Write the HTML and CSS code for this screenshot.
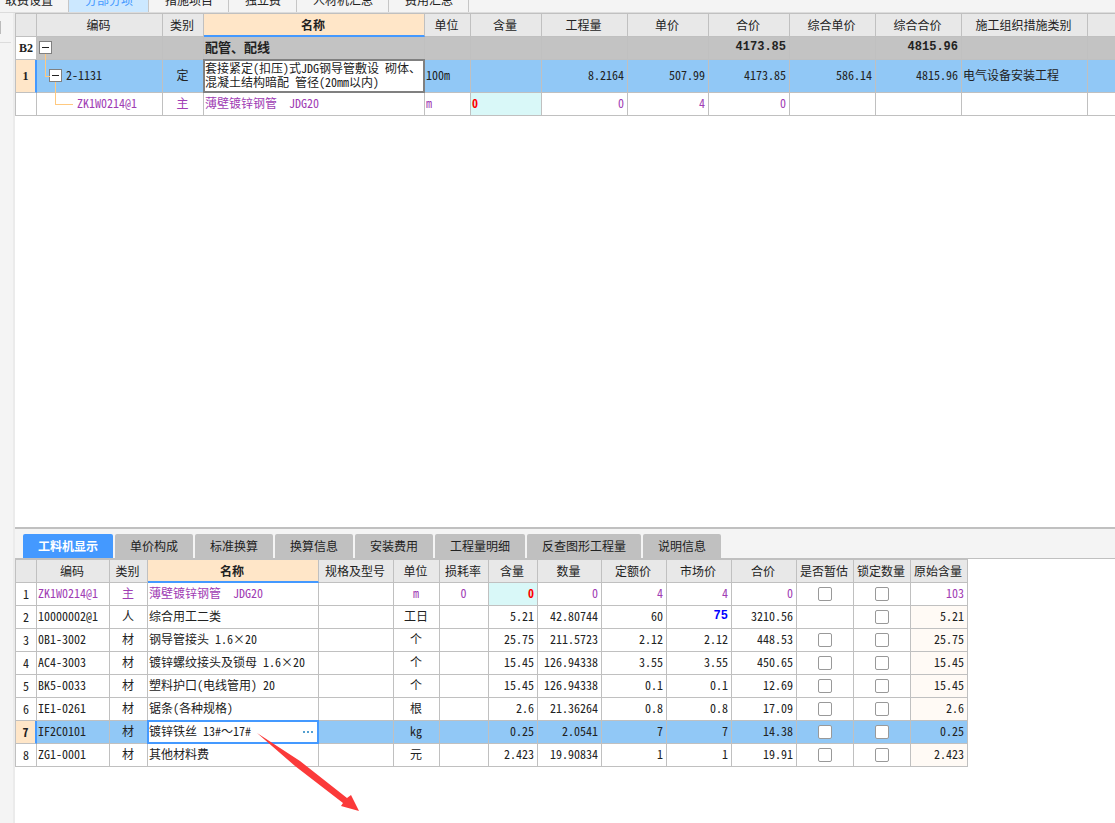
FILE: index.html
```html
<!DOCTYPE html>
<html lang="zh-CN">
<head>
<meta charset="utf-8">
<title>分部分项</title>
<link rel="stylesheet" href="styles.css">
</head>
<body>
<nav class="top-tabs">
  <button class="top-tab">取费设置</button>
  <button class="top-tab active">分部分项</button>
  <button class="top-tab">措施项目</button>
  <button class="top-tab">独立费</button>
  <button class="top-tab">人材机汇总</button>
  <button class="top-tab">费用汇总</button>
</nav>
<div class="workspace">
  <aside class="rail"><div class="rail-head"><i class="rail-handle"></i></div></aside>
  <main class="content">
    <section class="upper">
      <table class="grid items">
        <colgroup><col class="w21"><col class="w126"><col class="w41"><col class="w221"><col class="w46"><col class="w71"><col class="w86"><col class="w81"><col class="w81"><col class="w86"><col class="w86"><col class="w126"><col></colgroup>
        <thead><tr><th></th><th>编码</th><th>类别</th><th class="sorted">名称</th><th>单位</th><th>含量</th><th>工程量</th><th>单价</th><th>合价</th><th>综合单价</th><th>综合合价</th><th>施工组织措施类别</th><th></th></tr></thead>
        <tbody>
          <tr class="group"><td class="no">B2</td><td class="tree"><button class="toggle" aria-label="折叠"></button></td><td></td><td>配管、配线</td><td></td><td></td><td></td><td></td><td class="n">4173.85</td><td></td><td class="n">4815.96</td><td></td><td></td></tr>
          <tr class="current tall"><td class="no">1</td><td class="tree level-1"><div class="node"><button class="toggle" aria-label="折叠"></button><span>2-1131</span></div></td><td class="c">定</td><td class="host"><div class="cell-focus">套接紧定(扣压)式JDG钢导管敷设 砌体、<br>混凝土结构暗配 管径(20mm以内)</div></td><td>100m</td><td></td><td class="n">8.2164</td><td class="n">507.99</td><td class="n">4173.85</td><td class="n">586.14</td><td class="n">4815.96</td><td>电气设备安装工程</td><td></td></tr>
          <tr class="main-material"><td></td><td class="tree level-2">ZK1W0214@1</td><td class="c">主</td><td>薄壁镀锌钢管&nbsp; JDG20</td><td>m</td><td class="edited">0</td><td class="n">0</td><td class="n">4</td><td class="n">0</td><td></td><td></td><td></td><td></td></tr>
        </tbody>
      </table>
    </section>
    <section class="lower">
      <div class="sub-tabs">
        <button class="sub-tab active">工料机显示</button>
        <button class="sub-tab">单价构成</button>
        <button class="sub-tab">标准换算</button>
        <button class="sub-tab">换算信息</button>
        <button class="sub-tab">安装费用</button>
        <button class="sub-tab">工程量明细</button>
        <button class="sub-tab">反查图形工程量</button>
        <button class="sub-tab">说明信息</button>
      </div>
      <table class="grid resources">
        <colgroup><col class="w21"><col class="w73"><col class="w38"><col class="w171"><col class="w75"><col class="w46"><col class="w49"><col class="w49"><col class="w64"><col class="w65"><col class="w65"><col class="w65"><col class="w57"><col class="w57"><col class="w57"></colgroup>
        <thead><tr><th></th><th>编码</th><th>类别</th><th class="sorted">名称</th><th>规格及型号</th><th>单位</th><th>损耗率</th><th>含量</th><th>数量</th><th>定额价</th><th>市场价</th><th>合价</th><th>是否暂估</th><th>锁定数量</th><th>原始含量</th></tr></thead>
        <tbody>
          <tr class="main-material"><td class="no">1</td><td>ZK1W0214@1</td><td class="c">主</td><td>薄壁镀锌钢管&nbsp; JDG20</td><td></td><td class="c">m</td><td class="c">0</td><td class="n edited">0</td><td class="n">0</td><td class="n">4</td><td class="n">4</td><td class="n">0</td><td class="c"><input type="checkbox" aria-label="是否暂估"></td><td class="c"><input type="checkbox" aria-label="锁定数量"></td><td class="n">103</td></tr>
          <tr><td class="no">2</td><td>10000002@1</td><td class="c">人</td><td>综合用工二类</td><td></td><td class="c">工日</td><td></td><td class="n">5.21</td><td class="n">42.80744</td><td class="n">60</td><td class="n changed">75</td><td class="n">3210.56</td><td></td><td class="c"><input type="checkbox" aria-label="锁定数量"></td><td class="n origin">5.21</td></tr>
          <tr><td class="no">3</td><td>0B1-3002</td><td class="c">材</td><td>钢导管接头 1.6×20</td><td></td><td class="c">个</td><td></td><td class="n">25.75</td><td class="n">211.5723</td><td class="n">2.12</td><td class="n">2.12</td><td class="n">448.53</td><td class="c"><input type="checkbox" aria-label="是否暂估"></td><td class="c"><input type="checkbox" aria-label="锁定数量"></td><td class="n origin">25.75</td></tr>
          <tr><td class="no">4</td><td>AC4-3003</td><td class="c">材</td><td>镀锌螺纹接头及锁母 1.6×20</td><td></td><td class="c">个</td><td></td><td class="n">15.45</td><td class="n">126.94338</td><td class="n">3.55</td><td class="n">3.55</td><td class="n">450.65</td><td class="c"><input type="checkbox" aria-label="是否暂估"></td><td class="c"><input type="checkbox" aria-label="锁定数量"></td><td class="n origin">15.45</td></tr>
          <tr><td class="no">5</td><td>BK5-0033</td><td class="c">材</td><td>塑料护口(电线管用) 20</td><td></td><td class="c">个</td><td></td><td class="n">15.45</td><td class="n">126.94338</td><td class="n">0.1</td><td class="n">0.1</td><td class="n">12.69</td><td class="c"><input type="checkbox" aria-label="是否暂估"></td><td class="c"><input type="checkbox" aria-label="锁定数量"></td><td class="n origin">15.45</td></tr>
          <tr><td class="no">6</td><td>IE1-0261</td><td class="c">材</td><td>锯条(各种规格)</td><td></td><td class="c">根</td><td></td><td class="n">2.6</td><td class="n">21.36264</td><td class="n">0.8</td><td class="n">0.8</td><td class="n">17.09</td><td class="c"><input type="checkbox" aria-label="是否暂估"></td><td class="c"><input type="checkbox" aria-label="锁定数量"></td><td class="n origin">2.6</td></tr>
          <tr class="current"><td class="no">7</td><td>IF2C0101</td><td class="c">材</td><td class="host"><div class="cell-edit"><input type="text" aria-label="名称" value="镀锌铁丝 13#～17#"><button class="more" aria-label="更多"><i></i><i></i><i></i></button></div><svg class="arrow" width="103" height="80" viewBox="0 0 103 80" aria-hidden="true"><path d="M0 0L43 28L90 65L94 62L102 78L84 73L86 70L38 33Z" fill="#fb3a3a"/></svg></td><td></td><td class="c">kg</td><td></td><td class="n">0.25</td><td class="n">2.0541</td><td class="n">7</td><td class="n">7</td><td class="n">14.38</td><td class="c"><input type="checkbox" aria-label="是否暂估"></td><td class="c"><input type="checkbox" aria-label="锁定数量"></td><td class="n">0.25</td></tr>
          <tr><td class="no">8</td><td>ZG1-0001</td><td class="c">材</td><td>其他材料费</td><td></td><td class="c">元</td><td></td><td class="n">2.423</td><td class="n">19.90834</td><td class="n">1</td><td class="n">1</td><td class="n">19.91</td><td class="c"><input type="checkbox" aria-label="是否暂估"></td><td class="c"><input type="checkbox" aria-label="锁定数量"></td><td class="n origin">2.423</td></tr>
        </tbody>
      </table>
    </section>
  </main>
</div>
</body>
</html>
```
FILE: styles.css
```css
* { box-sizing: border-box; }

body {
  margin: 0;
  min-height: 100vh;
  display: flex;
  flex-direction: column;
  overflow: hidden;
  background: #f4f4f4;
  color: #222;
  font: 12px/14px "Noto Sans Mono CJK SC", "Noto Sans CJK SC", monospace;
}

button, input { font: inherit; color: inherit; }

/* Top tab strip */
.top-tabs {
  display: flex;
  align-items: flex-end;
  height: 13px;
  margin-left: -11px;
  overflow: hidden;
  border-bottom: 1px solid #dcdcdc;
}
.top-tab {
  flex: none;
  height: 24px;
  padding: 0 15px 0 16px;
  border: 0;
  border-right: 1px solid #c6c6c6;
  background: #f4f4f4;
}
.top-tab.active { background: #cce8ff; color: #4499ff; }

.workspace { display: flex; flex: 1; }
.rail { flex: none; width: 15px; border-right: 2px solid #ebebeb; }
.rail-head { height: 30px; margin-right: 2px; padding-top: 8px; border-bottom: 1px solid #dcdcdc; }
.rail-handle { display: block; width: 1px; height: 13px; background: #bbb; }

.content { flex: 1; min-width: 0; display: flex; flex-direction: column; }
.upper { flex: 1; background: #fff; }
.lower { padding-bottom: 56px; border-top: 2px solid #c0c0c0; background: #fff; }

/* Grids */
.grid {
  table-layout: fixed;
  border-spacing: 0;
  border-top: 1px solid #c0c0c0;
  border-left: 1px solid #c0c0c0;
}
.items { width: 100%; }
.resources { width: 953px; }
.w21 { width: 21px; } .w38 { width: 38px; } .w41 { width: 41px; } .w46 { width: 46px; }
.w49 { width: 49px; } .w57 { width: 57px; } .w64 { width: 64px; } .w65 { width: 65px; }
.w71 { width: 71px; } .w73 { width: 73px; } .w75 { width: 75px; } .w81 { width: 81px; }
.w86 { width: 86px; } .w126 { width: 126px; } .w171 { width: 171px; } .w221 { width: 221px; }

.grid th, .grid td {
  height: 23px;
  padding: 0 2px 2px 1px;
  border-right: 1px solid #c0c0c0;
  border-bottom: 1px solid #c0c0c0;
  text-align: left;
  vertical-align: middle;
  white-space: nowrap;
}
.grid th { padding: 0 2px 0 0; background: #e8e8e8; font-weight: 400; text-align: center; }
.grid th.sorted { border-bottom: 2px solid #4499ff; background: #ffe6c8; font-weight: 700; }
.grid .n { padding-right: 3px; text-align: right; }
.grid .c { text-align: center; }
.grid .no { padding: 0; background: #fff; text-align: center; }
.grid .tall td { height: 33px; }
.items th:last-child, .items td:last-child { border-right: 0; }

.group td { background: #c3c3c3; font-size: 13px; font-weight: 700; }
.group td.n { font-family: "Liberation Mono", monospace; font-size: 12px; }
.items td.no { font-family: "Liberation Serif", serif; font-size: 12px; font-weight: 700; }
.current td { background: #91c8f6; }
.grid .current .no { border-right: 2px solid #4499ff; background: #ffe6c8; font-weight: 700; }
.main-material td { color: #a03cb4; }
.main-material td.no { color: #222; }
.grid .edited { background: #d9f8f8; color: #f00; font-weight: 700; }
.grid .changed { color: #00f; font-family: "Liberation Mono", monospace; font-weight: 700; }
.origin { background: #fffaf5; }

/* Tree column */
.grid .tree { position: relative; padding: 0 2px 2px; }
.grid .level-1 { padding-left: 12px; }
.grid .level-2 { padding-left: 40px; }
.node { display: flex; align-items: center; gap: 4px; }
.level-1::before, .level-2::before {
  content: "";
  position: absolute;
  z-index: 1;
  height: 22px;
  border-left: 1px solid #ffc97f;
  border-bottom: 1px solid #ffc97f;
}
.level-1::before { left: 8px; top: -6px; width: 4px; }
.level-2::before { left: 18px; top: -11px; width: 17px; }
.toggle {
  display: block;
  width: 13px;
  height: 13px;
  padding: 0;
  border: 1px solid #808080;
  background: linear-gradient(#222, #222) center / 7px 1px no-repeat #fff;
}

/* Focused and edited cells cover the surrounding grid lines */
.grid .host { position: relative; }
.cell-focus, .cell-edit { position: absolute; inset: -1px; background: #fff; }
.cell-focus { border: 2px solid #808080; }
.cell-edit { display: flex; border: 2px solid #4499ff; }
.cell-edit input { flex: 1; min-width: 0; padding: 0 0 2px; border: 0; outline: 0; background: none; }
.more { display: flex; gap: 2px; align-items: center; padding: 0 4px; border: 0; background: none; }
.more i { width: 2px; height: 2px; background: #55a0d0; }
.arrow { position: absolute; z-index: 2; left: 109px; top: 12px; }

input[type="checkbox"] {
  appearance: none;
  display: block;
  width: 14px;
  height: 14px;
  margin: 2px auto 0;
  border: 1px solid #999;
  border-radius: 2px;
  background: #fff;
}

/* Lower tabs */
.sub-tabs { display: flex; gap: 2px; padding: 5px 8px 0; border-bottom: 1px solid #c0c0c0; background: #f4f4f4; }
.sub-tab {
  height: 24px;
  padding: 0 15px;
  border: 0;
  border-radius: 2px 2px 0 0;
  background: #c0c0c0;
}
.sub-tab.active { background: #4499ff; color: #fff; font-weight: 700; }
```
